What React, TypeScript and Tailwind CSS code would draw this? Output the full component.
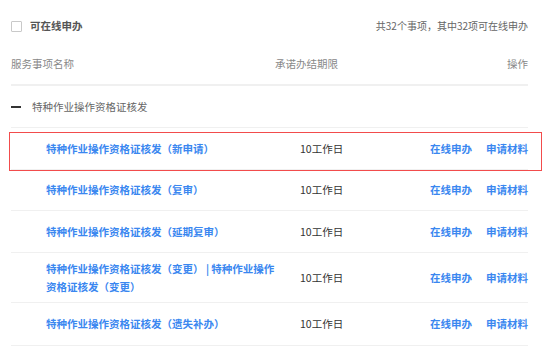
import React from "react";

const rows: { title: React.ReactNode; tall?: boolean }[] = [
  { title: "特种作业操作资格证核发（新申请）" },
  { title: "特种作业操作资格证核发（复审）" },
  { title: "特种作业操作资格证核发（延期复审）" },
  {
    title: (
      <>
        特种作业操作资格证核发（变更） | 特种作业操作
        <br />
        资格证核发（变更）
      </>
    ),
    tall: true,
  },
  { title: "特种作业操作资格证核发（遗失补办）" },
];

export default function App() {
  return (
    <div
      className="relative w-[558px] h-[359px] bg-white overflow-hidden pl-[11px] pr-[30px] text-[10.5px] leading-[18px]"
      style={{ fontFamily: '"Noto Sans CJK SC", "Noto Sans", sans-serif' }}
    >
      {/* top bar */}
      <div className="flex h-[52px] items-center justify-between">
        <div className="flex items-center gap-[8px]">
          <span className="block w-[11px] h-[11px] border border-[#c9c9c9] rounded-[1px] bg-white" />
          <span className="font-bold text-[#555]">可在线申办</span>
        </div>
        <span className="text-[#666] text-[10px]">共32个事项，其中32项可在线申办</span>
      </div>

      {/* header */}
      <div className="flex h-[34px] items-center pb-[8px] border-b-2 border-[#f0f0f0] text-[#888] box-border">
        <div className="w-[264px]">服务事项名称</div>
        <div className="flex-1">承诺办结期限</div>
        <div className="text-right">操作</div>
      </div>

      {/* group row */}
      <div className="flex h-[42px] items-center border-b border-[#f0f0f0] box-border">
        <span className="block w-[10px] h-[2px] bg-[#333] mr-[11px]" />
        <span className="text-[#666]">特种作业操作资格证核发</span>
      </div>

      {rows.map((r, i) => (
        <div
          key={i}
          className={`flex items-center border-b border-[#f0f0f0] box-border py-[7px] ${
            r.tall ? "h-[50px]" : i === 4 ? "h-[43px]" : i === 1 ? "h-[41px]" : "h-[42px]"
          }`}
        >
          <div className="w-[264px] pl-[35px] font-bold text-[#3a87f0]">{r.title}</div>
          <div className="flex-1 pl-[25px] text-[#333]">10工作日</div>
          <div className="flex gap-[14px] font-bold text-[#3a87f0]">
            <span>在线申办</span>
            <span>申请材料</span>
          </div>
        </div>
      ))}

      {/* highlight overlay */}
      <div className="absolute left-[9px] top-[132px] w-[533px] h-[39px] border border-[#f24c4c] pointer-events-none" />
    </div>
  );
}
